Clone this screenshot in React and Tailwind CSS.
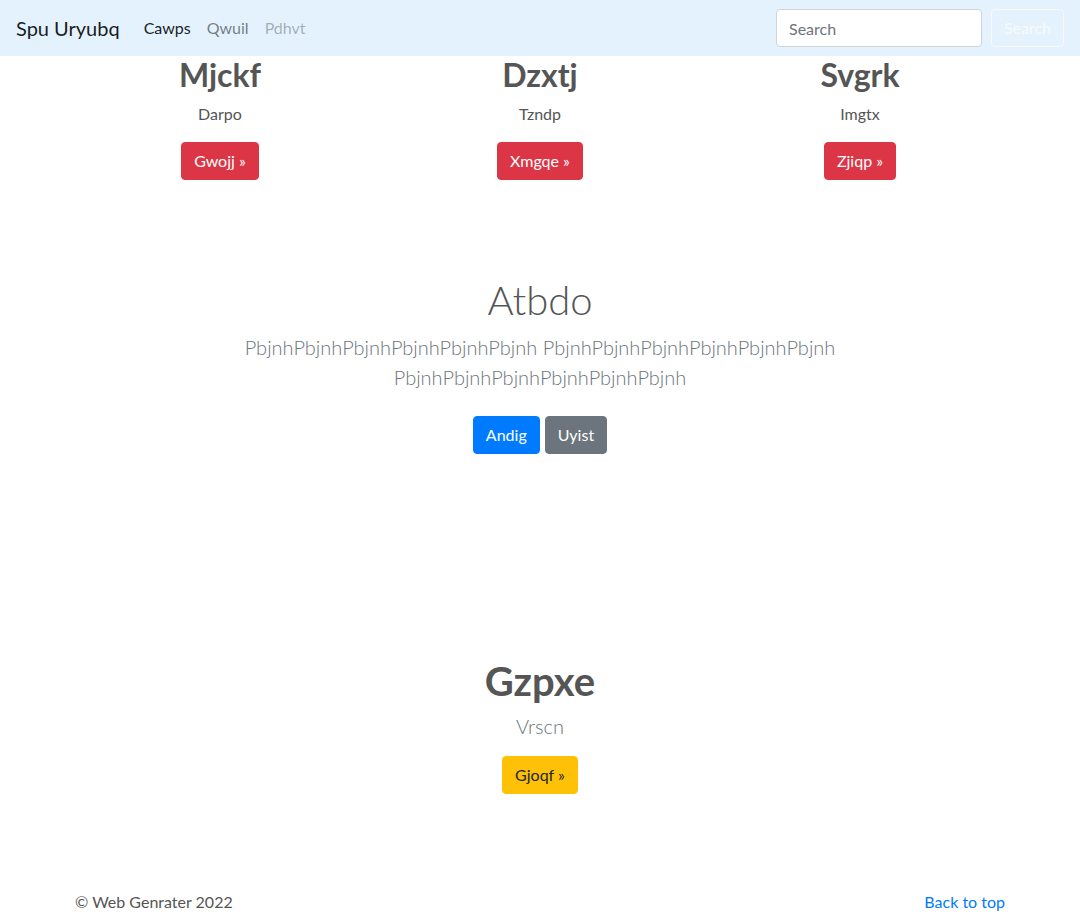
const font = { fontFamily: "Lato, 'Open Sans', sans-serif" };

function Feature({ title, sub, action }) {
  return (
    <div className="text-center">
      <h2 className="text-[32px] leading-[1.2] font-bold mb-2">{title}</h2>
      <p className="mb-4">{sub}</p>
      <a className="inline-block px-3 py-[6px] rounded border border-[#dc3545] bg-[#dc3545] text-white leading-6">
        {action} &raquo;
      </a>
    </div>
  );
}

export default function App() {
  return (
    <div className="min-h-screen bg-white text-[#555] text-base leading-6" style={font}>
      <nav className="h-14 bg-[#e3f2fd] flex items-center px-4">
        <a className="text-[20px] text-black/90 mr-4 leading-[30px]">Spu Uryubq</a>
        <ul className="flex">
          <li><a className="block px-2 text-black/90">Cawps</a></li>
          <li><a className="block px-2 text-black/50">Qwuil</a></li>
          <li><a className="block px-2 text-black/30">Pdhvt</a></li>
        </ul>
        <form className="ml-auto flex items-center">
          <input
            className="w-[206px] h-[38px] px-3 mr-[9px] rounded border border-[#ced4da] bg-white text-[#495057] placeholder-[#6c757d] outline-none"
            placeholder="Search"
          />
          <button className="w-[73px] h-[38px] rounded border border-[#f8f9fa] text-[#f8f9fa]">
            Search
          </button>
        </form>
      </nav>

      <div className="w-[960px] mx-auto grid grid-cols-3">
        <Feature title="Mjckf" sub="Darpo" action="Gwojj" />
        <Feature title="Dzxtj" sub="Tzndp" action="Xmgqe" />
        <Feature title="Svgrk" sub="Imgtx" action="Zjiqp" />
      </div>

      <section className="text-center mt-[96px]">
        <h1 className="text-[40px] leading-[1.2] font-light mb-2">Atbdo</h1>
        <p className="max-w-[610px] mx-auto text-[20px] leading-[30px] font-light text-[#6c757d] mb-[24px]">
          PbjnhPbjnhPbjnhPbjnhPbjnhPbjnh PbjnhPbjnhPbjnhPbjnhPbjnhPbjnh PbjnhPbjnhPbjnhPbjnhPbjnhPbjnh
        </p>
        <p className="flex justify-center gap-[5px]">
          <a className="inline-block px-3 py-[6px] rounded border border-[#007bff] bg-[#007bff] text-white">Andig</a>
          <a className="inline-block px-3 py-[6px] rounded border border-[#6c757d] bg-[#6c757d] text-white">Uyist</a>
        </p>
      </section>

      <section className="text-center mt-[203px]">
        <h2 className="text-[40px] leading-[1.2] font-bold mb-[6px]">Gzpxe</h2>
        <p className="text-[20px] leading-[30px] font-light text-[#6c757d] mb-[15px]">Vrscn</p>
        <a className="inline-block px-3 py-[6px] rounded border border-[#ffc107] bg-[#ffc107] text-[#212529]">
          Gjoqf &raquo;
        </a>
      </section>

      <footer className="w-[960px] mx-auto px-[15px] mt-[96px] flex justify-between">
        <p>&copy; Web Genrater 2022</p>
        <a className="text-[#007bff]">Back to top</a>
      </footer>
    </div>
  );
}
